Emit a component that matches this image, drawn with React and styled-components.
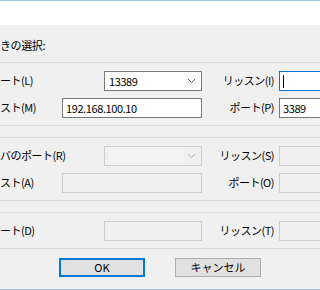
import React from "react";
import styled, { createGlobalStyle } from "styled-components";

const Global = createGlobalStyle`
  html, body {
    margin: 0;
    padding: 0;
    background: #f0f0f0;
  }
  body {
    font-family: "Noto Sans CJK JP", "Noto Sans", sans-serif;
    font-size: 11px;
    color: #000;
  }
`;

const Window = styled.div`
  width: 320px;
  height: 290px;
  box-sizing: border-box;
  overflow: hidden;
  background: #f0f0f0;
  border-top: 1px solid #9dc6ec;
  border-bottom: 1px solid #9dc6ec;
  display: flex;
  flex-direction: column;
`;

const TitleBar = styled.div`
  height: 24px;
  background: #fff;
  flex: none;
`;

const Caption = styled.div`
  height: 37px;
  box-sizing: border-box;
  padding-top: 3px;
  display: flex;
  align-items: center;
  letter-spacing: -0.4px;
  flex: none;
`;

const Group = styled.div`
  border-top: 1px solid #dcdcdc;
  border-bottom: 1px solid #dcdcdc;
  padding: 8px 0 7px;
  margin-bottom: ${(p) => (p.$last ? "9px" : "11px")};
  display: grid;
  grid-template-columns: 62px 42px 98px 77px 1fr;
  grid-auto-rows: 20px;
  row-gap: 7px;
  flex: none;
`;

const Label = styled.div`
  grid-column: ${(p) => p.$col || "1 / 3"};
  align-self: center;
  line-height: 1;
  white-space: nowrap;
  letter-spacing: -0.5px;
  margin-top: -2px;
`;

const SideLabel = styled.div`
  grid-column: 4;
  align-self: center;
  text-align: right;
  padding-right: 5px;
  line-height: 1;
  white-space: nowrap;
  letter-spacing: -0.5px;
  margin-top: -2px;
`;

const Field = styled.div`
  grid-column: ${(p) => p.$col || "3"};
  box-sizing: border-box;
  height: 20px;
  min-width: ${(p) => (p.$wide ? "60px" : "0")};
  border: 1px solid
    ${(p) => (p.$focused ? "#0078d7" : p.$disabled ? "#cccccc" : "#7a7a7a")};
  background: ${(p) => (p.$disabled ? "#f0f0f0" : "#fff")};
  display: flex;
  align-items: center;
  padding: 0 4px 0 3px;
  letter-spacing: -0.4px;
  white-space: nowrap;
`;

const Combo = styled(Field)`
  justify-content: space-between;
  padding: 0 5px 0 4px;
`;

const Slot = styled.div`
  width: 75px;
  height: 14px;
  background: ${(p) => (p.$disabled ? "#f3f3f3" : "transparent")};
  display: flex;
  align-items: center;
`;

const Caret = styled.span`
  width: 1px;
  height: 13px;
  background: #000;
`;

const Buttons = styled.div`
  display: flex;
  gap: 30px;
  padding-left: 59px;
  flex: none;
`;

const Button = styled.div`
  width: 86px;
  height: 19px;
  box-sizing: border-box;
  background: #e1e1e1;
  border: ${(p) => (p.$default ? "2px solid #0078d7" : "1px solid #adadad")};
  display: flex;
  align-items: center;
  justify-content: center;
  line-height: 1;
`;

const Chevron = ({ disabled }) => (
  <svg width="9" height="6" viewBox="0 0 9 6">
    <path
      d="M1 1 L4.5 4.5 L8 1"
      fill="none"
      stroke={disabled ? "#b4b4b4" : "#606060"}
      strokeWidth="1"
    />
  </svg>
);

export default function App() {
  return (
    <>
      <Global />
      <Window>
        <TitleBar />
        <Caption>きの選択:</Caption>

        <Group>
          <Label>ート(L)</Label>
          <Combo>
            <Slot>13389</Slot>
            <Chevron />
          </Combo>
          <SideLabel>リッスン(I)</SideLabel>
          <Field $col="5" $wide $focused>
            <Caret />
          </Field>

          <Label $col="1">スト(M)</Label>
          <Field $col="2 / 4">192.168.100.10</Field>
          <SideLabel>ポート(P)</SideLabel>
          <Field $col="5" $wide>3389</Field>
        </Group>

        <Group>
          <Label>バのポート(R)</Label>
          <Combo $disabled>
            <Slot $disabled />
            <Chevron disabled />
          </Combo>
          <SideLabel>リッスン(S)</SideLabel>
          <Field $col="5" $wide $disabled />

          <Label $col="1">スト(A)</Label>
          <Field $col="2 / 4" $disabled />
          <SideLabel>ポート(O)</SideLabel>
          <Field $col="5" $wide $disabled />
        </Group>

        <Group $last>
          <Label>ート(D)</Label>
          <Field $disabled />
          <SideLabel>リッスン(T)</SideLabel>
          <Field $col="5" $wide $disabled />
        </Group>

        <Buttons>
          <Button $default>OK</Button>
          <Button>キャンセル</Button>
        </Buttons>
      </Window>
    </>
  );
}
